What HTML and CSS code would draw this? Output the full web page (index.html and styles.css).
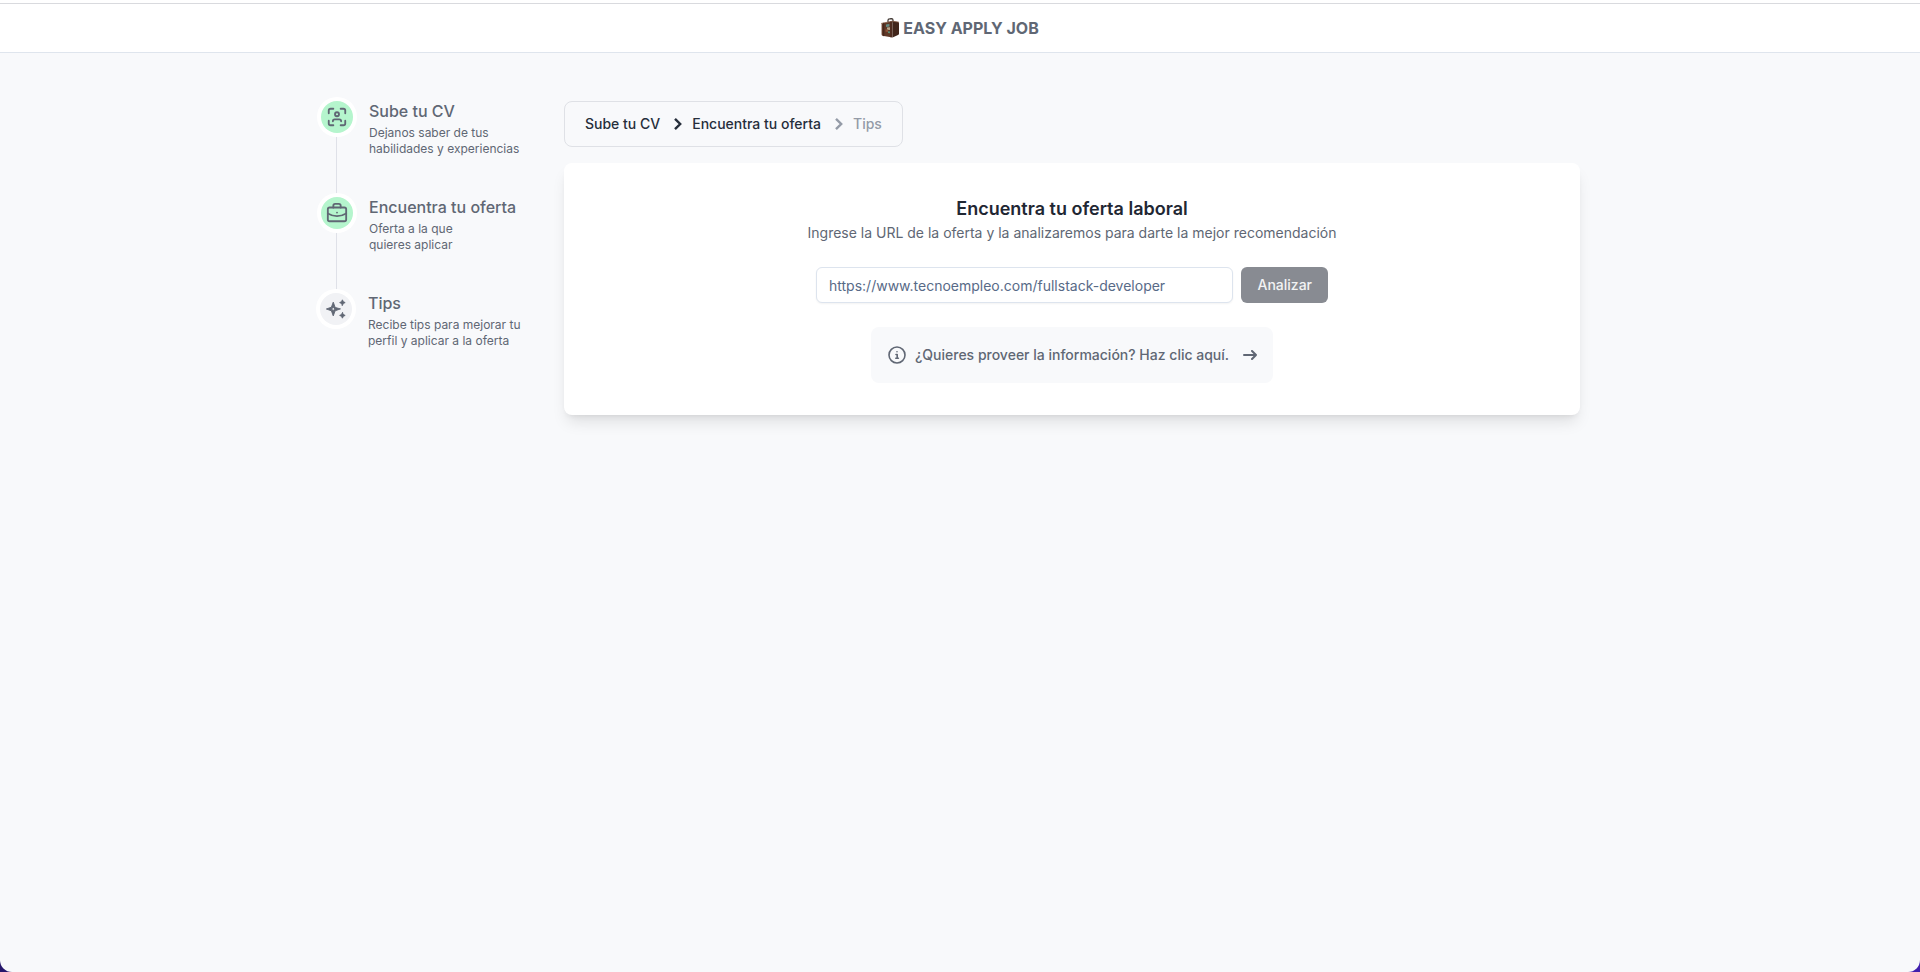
FILE: index.html
```html
<!DOCTYPE html>
<html lang="es">
<head>
<meta charset="utf-8">
<meta name="viewport" content="width=device-width, initial-scale=1">
<title>Easy Apply Job</title>
<link rel="stylesheet" href="styles.css">
</head>
<body>
<div class="page">
  <header class="header">
    <a class="brand" href="#">
      <svg class="brand-icon" viewBox="0 0 18 20" aria-hidden="true">
        <path d="M7 4V2.200Q7 1 8.500 .9L10.500 .7Q12 .7 12 2V4" fill="none" stroke="#3c332e" stroke-width="1.200"/>
        <path d="M.6 5.400 11.500 3.200V19.600L1.400 17.800Q.6 17.600 .6 16.600Z" fill="#5f3827"/>
        <path d="M11.500 3.200 17 4Q18 4.200 18 5.200V15.500Q18 16.500 17 17L11.500 19.600Z" fill="#42261b"/>
        <path d="M.6 5.400 11.500 3.200 17.600 4.200" fill="none" stroke="#80563d" stroke-width=".8"/>
        <path d="M2.700 5.200V17.800M10 3.700V19" stroke="#3a2017" stroke-width=".8"/>
        <path d="M5 6.500 8.400 6V8.600L5 9Z" fill="#638c84"/>
        <path d="M6 9.500 9 9.200V12L6 11.800Z" fill="#b7a588"/>
        <path d="M4.500 11.400 7 11.600V14L4.500 13.700Z" fill="#8c5137"/>
        <path d="M7 13.200 9 13.400V15.200L7 15Z" fill="#588d75"/>
      </svg>
      <span>EASY APPLY JOB</span>
    </a>
  </header>

  <div class="layout">
    <ol class="steps">
      <li class="step">
        <span class="step-badge done">
          <svg class="icon" viewBox="0 0 24 24" aria-hidden="true"><path d="M3 8V5a2 2 0 0 1 2-2h3M16 3h3a2 2 0 0 1 2 2v3M21 16v3a2 2 0 0 1-2 2h-3M8 21H5a2 2 0 0 1-2-2v-3"/><circle cx="12" cy="9" r="2.200"/><path d="M7.500 16.700v-.2a2 2 0 0 1 2-2h5a2 2 0 0 1 2 2v.2"/></svg>
        </span>
        <div>
          <h3 class="step-title">Sube tu CV</h3>
          <p class="step-text">Dejanos saber de tus<br>habilidades y experiencias</p>
        </div>
      </li>
      <li class="step">
        <span class="step-badge done">
          <svg class="icon" viewBox="0 0 24 24" aria-hidden="true"><rect x="2" y="6" width="20" height="15" rx="2"/><path d="M8 6V4a2 2 0 0 1 2-2h4a2 2 0 0 1 2 2v2M12 11.500v.01M2 12.500a20 20 0 0 0 20 0"/></svg>
        </span>
        <div>
          <h3 class="step-title">Encuentra tu oferta</h3>
          <p class="step-text">Oferta a la que<br>quieres aplicar</p>
        </div>
      </li>
      <li class="step">
        <span class="step-badge">
          <svg class="icon icon-solid" viewBox="0 0 24 24" aria-hidden="true"><path fill-rule="evenodd" d="m19 8 1-2 2-1-2-1-1-2-1 2-2 1 2 1zM19 16l-1 2-2 1 2 1 1 2 1-2 2-1-2-1zM11 10 9 4.500 7 10 1.500 12 7 14 9 19.500 11 14 16.500 12zM9.800 12.800 9 14.800 8.200 12.800 6.200 12 8.200 11.200 9 9.200 9.800 11.200 11.800 12z"/></svg>
        </span>
        <div>
          <h3 class="step-title">Tips</h3>
          <p class="step-text">Recibe tips para mejorar tu<br>perfil y aplicar a la oferta</p>
        </div>
      </li>
    </ol>

    <main class="content">
      <nav aria-label="Progreso">
        <ol class="crumbs">
          <li><a href="#">Sube tu CV</a></li>
          <li><svg class="chevron" viewBox="0 0 8 12" aria-hidden="true"><path d="m1 .8 5.200 5.200L1 11.200"/></svg><a href="#" aria-current="step">Encuentra tu oferta</a></li>
          <li class="pending"><svg class="chevron" viewBox="0 0 8 12" aria-hidden="true"><path d="m1 .8 5.200 5.200L1 11.200"/></svg><span>Tips</span></li>
        </ol>
      </nav>

      <section class="card">
        <h1 class="card-title">Encuentra tu oferta laboral</h1>
        <label class="card-text" for="offer-url">Ingrese la URL de la oferta y la analizaremos para darte la mejor recomendación</label>
        <form class="form">
          <input class="field" id="offer-url" type="url" placeholder="https://www.tecnoempleo.com/fullstack-developer">
          <button class="submit" type="submit" disabled>Analizar</button>
        </form>
        <a class="notice" href="#">
          <svg class="notice-icon" viewBox="0 0 20 20" aria-hidden="true"><circle cx="10" cy="10" r="8"/><path d="M9 9.500h1.200v3.700M8.800 13.300h2.600M10 6.800v.01"/></svg>
          <span>¿Quieres proveer la información? Haz clic aquí.</span>
          <svg class="arrow" viewBox="0 0 14 10" aria-hidden="true"><path d="M1 5h12M13 5 9 1M13 5 9 9"/></svg>
        </a>
      </section>
    </main>
  </div>
</div>
</body>
</html>
```
FILE: styles.css
```css
* {
  box-sizing: border-box;
}

html {
  background: linear-gradient(90deg, #26176b, #401fae);
}

body,
h1,
h3,
p,
ol {
  margin: 0;
  padding: 0;
}

body {
  font-family: Inter, "Liberation Sans", sans-serif;
  font-size: 14px;
  line-height: 20px;
  color: #606774;
}

ol {
  list-style: none;
}

a {
  color: inherit;
  text-decoration: none;
}

svg {
  flex: none;
  fill: none;
  stroke: currentColor;
  stroke-width: 2;
  stroke-linecap: round;
  stroke-linejoin: round;
}

.page {
  min-height: 100vh;
  border-top: 3px solid #fff;
  border-radius: 0 0 12px 12px;
  background: #f8f9fb;
}

.header {
  display: flex;
  justify-content: center;
  padding: 12px 20px;
  border-top: 1px solid #d9dade;
  border-bottom: 1px solid #dfe5ed;
  background: #fff;
}

.brand {
  display: flex;
  align-items: center;
  gap: 4px;
  font-size: 16px;
  line-height: 24px;
  font-weight: 700;
}

.brand-icon {
  width: 18px;
  height: 20px;
  stroke: none;
}

.layout {
  display: flex;
  gap: 40px;
  max-width: 1280px;
  margin: 0 auto;
  padding: 48px 20px 48px 0;
}

.steps {
  flex: none;
  width: 204px;
}

.step {
  position: relative;
  display: flex;
  gap: 16px;
  padding-bottom: 40px;
}

.step:not(:last-child) {
  padding-left: 1px;
}

.step:not(:last-child)::before {
  content: "";
  position: absolute;
  top: 16px;
  left: 16px;
  width: 1px;
  height: 96px;
  background: #dfe1e8;
}

.step-badge {
  position: relative;
  z-index: 1;
  flex: none;
  display: flex;
  align-items: center;
  justify-content: center;
  width: 32px;
  height: 32px;
  border-radius: 50%;
  background: #f1f2f5;
  box-shadow: 0 0 0 4px #fff;
}

.step-badge.done {
  background: #b5f5cd;
}

.icon {
  width: 22px;
  height: 22px;
}

.icon-solid {
  fill: currentColor;
  stroke-width: 1;
}

.step-title {
  margin-bottom: 4px;
  font-size: 16px;
  line-height: 20px;
  font-weight: 500;
}

.step-text {
  font-size: 12px;
  line-height: 16px;
}

.content {
  flex: 1;
  min-width: 0;
}

.crumbs {
  display: flex;
  width: fit-content;
  margin-bottom: 16px;
  padding: 12px 20px;
  border: 1px solid #dfe1e6;
  border-radius: 8px;
  font-weight: 500;
  color: #262e3b;
}

.crumbs li {
  display: flex;
  align-items: center;
}

.chevron {
  width: 8px;
  height: 12px;
  margin: 0 10px 0 14px;
  overflow: visible;
  stroke-width: 2.4;
  stroke-linecap: butt;
  stroke-linejoin: miter;
}

.pending {
  color: #949ba7;
}

.card {
  display: flex;
  flex-direction: column;
  align-items: center;
  padding: 32px;
  border-radius: 8px;
  background: #fff;
  box-shadow: 0 10px 15px -3px rgba(0, 0, 0, 0.1), 0 4px 6px -4px rgba(0, 0, 0, 0.1);
}

.card-title {
  font-size: 18px;
  line-height: 28px;
  font-weight: 600;
  color: #1f2733;
}

.form {
  display: flex;
  justify-content: center;
  gap: 8px;
  width: 100%;
  max-width: 512px;
  margin: 24px 0;
}

.field {
  flex: 1;
  min-width: 0;
  height: 36px;
  padding: 4px 12px;
  border: 1px solid #dde4ee;
  border-radius: 6px;
  background: #fff;
  box-shadow: 0 1px 2px rgba(0, 0, 0, 0.05);
  font: inherit;
}

.field::placeholder {
  color: #586a87;
  opacity: 1;
}

.submit {
  height: 36px;
  padding: 0 16px;
  border: 0;
  border-radius: 6px;
  background: #888b92;
  font: inherit;
  font-weight: 500;
  color: #f2f3f4;
}

.notice {
  display: flex;
  align-items: center;
  gap: 8px;
  padding: 18px 16px;
  border-radius: 8px;
  background: #f8f9fb;
  font-weight: 500;
}

.notice-icon {
  width: 20px;
  height: 20px;
  stroke-width: 1.6;
}

.arrow {
  width: 14px;
  height: 10px;
  margin-left: 6px;
}
```
